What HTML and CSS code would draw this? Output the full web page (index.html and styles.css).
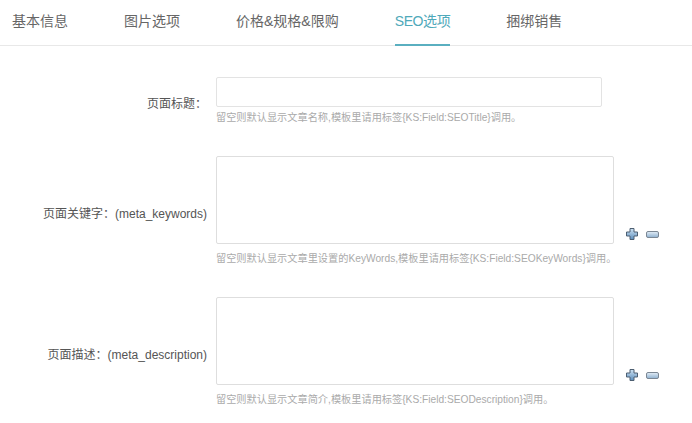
FILE: index.html
```html
<!DOCTYPE html>
<html lang="zh-CN">
<head>
  <meta charset="UTF-8">
  <title>SEO选项</title>
  <link rel="stylesheet" href="styles.css">
</head>
<body>
  <nav class="tabs">
    <a class="tab">基本信息</a>
    <a class="tab">图片选项</a>
    <a class="tab">价格&amp;规格&amp;限购</a>
    <a class="tab active">SEO选项</a>
    <a class="tab">捆绑销售</a>
  </nav>

  <form class="seo-form">
    <label class="row-label">页面标题：</label>
    <div class="field">
      <input type="text" class="text-input">
      <p class="hint">留空则默认显示文章名称,模板里请用标签{KS:Field:SEOTitle}调用。</p>
    </div>

    <label class="row-label label-area">页面关键字：(meta_keywords)</label>
    <div class="field">
      <div class="area-line">
        <textarea class="text-area"></textarea>
        <span class="tools">
          <svg class="ico-plus" width="12" height="12" viewBox="0 0 12 12"><defs><linearGradient id="gp1" x1="0" y1="0" x2="0" y2="1"><stop offset="0" stop-color="#cfe3f3"/><stop offset="1" stop-color="#5e8fbd"/></linearGradient></defs><path d="M4 .5h4v3.5h3.5v4H8v3.5H4V8H.5V4H4z" fill="url(#gp1)" stroke="#4d5f72" stroke-width="1"/></svg>
          <svg class="ico-minus" width="13" height="7" viewBox="0 0 13 7"><defs><linearGradient id="gm1" x1="0" y1="0" x2="0" y2="1"><stop offset="0" stop-color="#e4eef7"/><stop offset="1" stop-color="#8fb1d0"/></linearGradient></defs><rect x=".5" y=".5" width="12" height="6" rx="1.5" fill="url(#gm1)" stroke="#7b8794"/></svg>
        </span>
      </div>
      <p class="hint hint-area">留空则默认显示文章里设置的KeyWords,模板里请用标签{KS:Field:SEOKeyWords}调用。</p>
    </div>

    <label class="row-label label-area">页面描述：(meta_description)</label>
    <div class="field">
      <div class="area-line">
        <textarea class="text-area"></textarea>
        <span class="tools">
          <svg class="ico-plus" width="12" height="12" viewBox="0 0 12 12"><defs><linearGradient id="gp2" x1="0" y1="0" x2="0" y2="1"><stop offset="0" stop-color="#cfe3f3"/><stop offset="1" stop-color="#5e8fbd"/></linearGradient></defs><path d="M4 .5h4v3.5h3.5v4H8v3.5H4V8H.5V4H4z" fill="url(#gp2)" stroke="#4d5f72" stroke-width="1"/></svg>
          <svg class="ico-minus" width="13" height="7" viewBox="0 0 13 7"><defs><linearGradient id="gm2" x1="0" y1="0" x2="0" y2="1"><stop offset="0" stop-color="#e4eef7"/><stop offset="1" stop-color="#8fb1d0"/></linearGradient></defs><rect x=".5" y=".5" width="12" height="6" rx="1.5" fill="url(#gm2)" stroke="#7b8794"/></svg>
        </span>
      </div>
      <p class="hint hint-area">留空则默认显示文章简介,模板里请用标签{KS:Field:SEODescription}调用。</p>
    </div>
  </form>
</body>
</html>
```

FILE: styles.css
```css
body {
  margin: 0;
  font-family: "Liberation Sans", "Noto Sans CJK SC", sans-serif;
  background: #fff;
  color: #555;
}

.tabs {
  display: flex;
  gap: 56px;
  padding-left: 12px;
  border-bottom: 1px solid #e8e8e8;
}

.tab {
  font-size: 14px;
  line-height: 42px;
  padding-bottom: 2px;
  border-bottom: 2px solid transparent;
  margin-bottom: -1px;
  color: #666;
}

.tab.active {
  color: #4fa9ba;
  border-bottom-color: #5aafc0;
  letter-spacing: -0.4px;
}

.seo-form {
  display: grid;
  grid-template-columns: 216px 1fr;
  row-gap: 31px;
  padding-top: 31px;
  align-items: center;
}

.row-label {
  font-size: 12px;
  text-align: right;
  padding-right: 9px;
  padding-top: 2px;
  color: #555;
}

.field {
  display: flex;
  flex-direction: column;
}

.text-input {
  box-sizing: border-box;
  width: 386px;
  height: 30px;
  margin: 0;
  border: 1px solid #e3e3e3;
  border-radius: 2px;
}

.area-line {
  display: flex;
  align-items: flex-end;
  gap: 12px;
}

.text-area {
  box-sizing: border-box;
  width: 398px;
  height: 88px;
  margin: 0;
  border: 1px solid #dedede;
  border-radius: 2px;
  resize: none;
}

.tools {
  display: flex;
  align-items: center;
  gap: 8px;
  margin-bottom: 4px;
}

.hint {
  margin: 4px 0 0;
  font-size: 10.2px;
  line-height: 14px;
  color: #aaa;
}

.hint-area {
  margin-top: 8px;
}
```
